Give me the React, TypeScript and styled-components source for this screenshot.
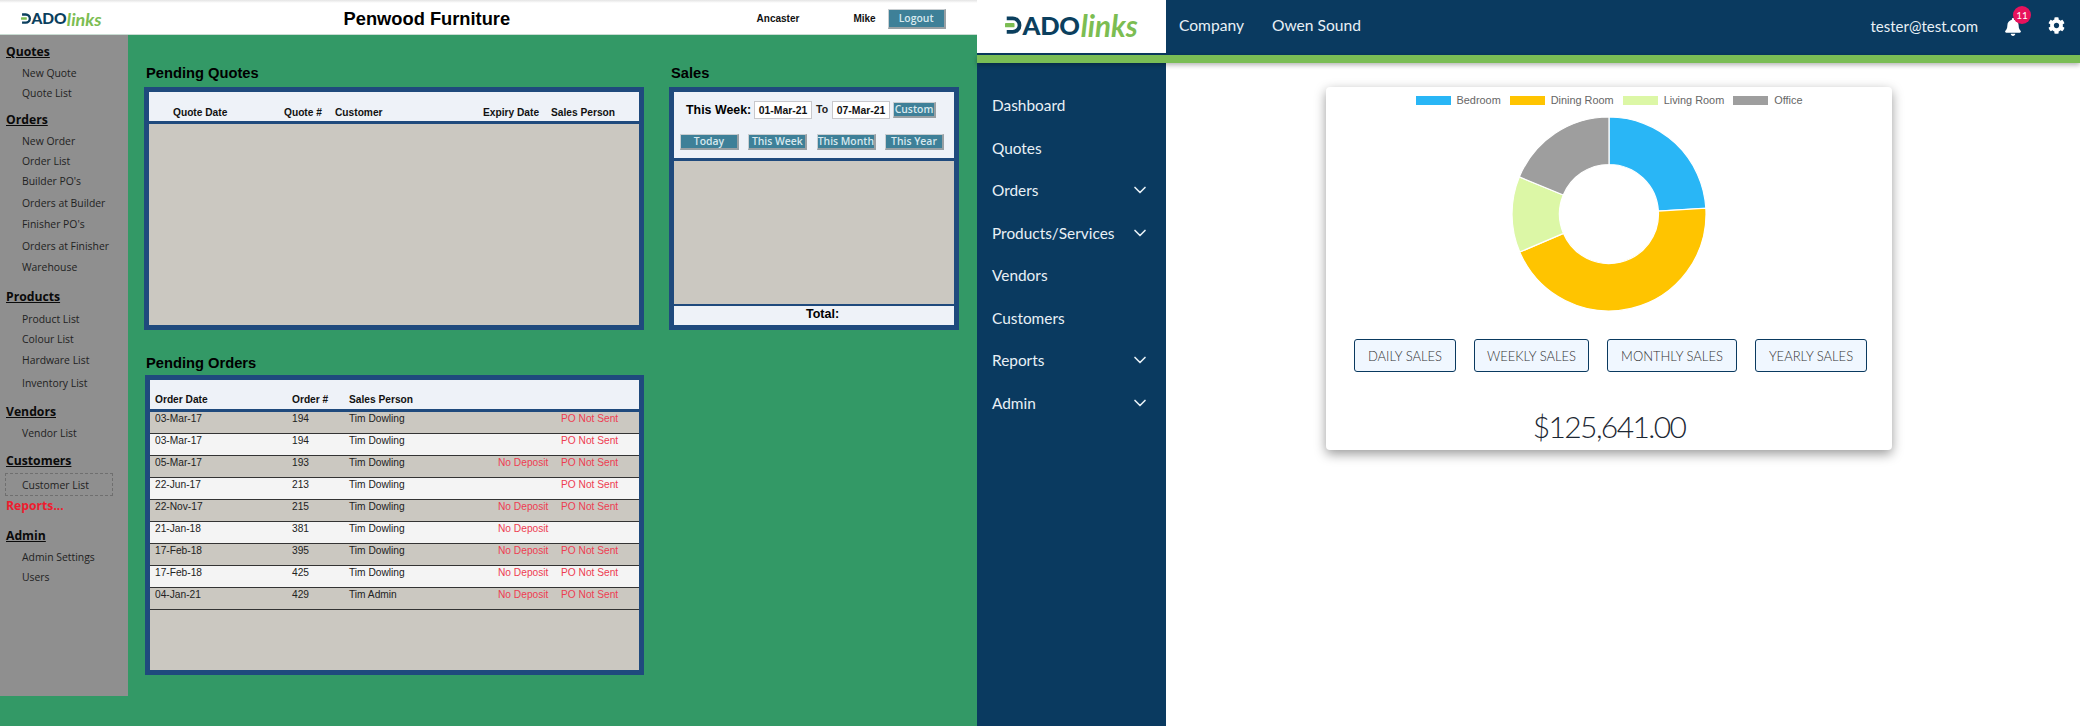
import React from "react"
import styled, { createGlobalStyle } from "styled-components"
import { FaBell, FaCog } from "react-icons/fa"
import { ChevronDown } from "lucide-react"

const GlobalStyle = createGlobalStyle`
  html, body {
    margin: 0;
    padding: 0;
    background: #fff;
  }
  * {
    box-sizing: border-box;
  }
`

const Page = styled.div`
  display: flex;
  width: 2080px;
  height: 726px;
  overflow: hidden;
`

/* shared logo */
const LogoWrap = styled.div<{ $size: number }>`
  display: flex;
  align-items: center;
  font-size: ${(p) => p.$size}px;
  line-height: 1;
  white-space: nowrap;

  svg {
    width: 0.68em;
    height: 0.72em;
    flex: none;
  }
`

const LogoDark = styled.span`
  font-family: Lato, "Liberation Sans", sans-serif;
  font-weight: 900;
  color: #0b3f5e;
  letter-spacing: -0.01em;
`

const LogoGreen = styled.span`
  font-family: Lato, "Liberation Sans", sans-serif;
  font-style: italic;
  font-weight: 700;
  color: #7cbd52;
  font-size: 1.16em;
  margin-left: 0.03em;
`

const Logo = ({ size }: { size: number }) => (
  <LogoWrap $size={size}>
    <svg viewBox="0 0 20 20">
      <path d="M2 0H9a10 10 0 0 1 0 20H2v-4.4H9a5.6 5.6 0 0 0 0-11.2H2Z" fill="#0b3f5e" />
      <rect x="0" y="7.6" width="11" height="4.8" rx="1" fill="#7cbd52" />
    </svg>
    <LogoDark>ADO</LogoDark>
    <LogoGreen>links</LogoGreen>
  </LogoWrap>
)

/* old dashboard, left half */
const OldApp = styled.div`
  width: 977px;
  height: 726px;
  background: #339966;
  font-family: "Liberation Sans", Arial, sans-serif;
  flex: none;
`

const OldHeader = styled.header`
  position: relative;
  display: flex;
  align-items: center;
  height: 35px;
  padding: 3px 0 0 21px;
  background: linear-gradient(#e4e4e4, #fff 3px);
  border-bottom: 1px solid #c9dcd2;
`

const OldTitle = styled.h1`
  margin: 0 0 0 242px;
  width: 166px;
  font-size: 18.3px;
  font-weight: 700;
  color: #000;
  white-space: nowrap;
`

const Branch = styled.span`
  margin-left: 247px;
  font-size: 10px;
  font-weight: 700;
  color: #111;
`

const OldUser = styled(Branch)`
  margin-left: 54px;
`

const TealButton = styled.button<{ $w: number; $h?: number }>`
  width: ${(p) => p.$w}px;
  height: ${(p) => p.$h ?? 16}px;
  padding: 0;
  background: #3e8098;
  color: #d7e9ef;
  border: 1px solid #c9ced1;
  border-right: 2px solid #98a0a4;
  border-bottom: 2px solid #98a0a4;
  font-family: "Open Sans", sans-serif;
  font-size: 10.4px;
  font-weight: 600;
  line-height: 1;
  white-space: nowrap;
`

const LogoutButton = styled(TealButton)`
  margin-left: 12px;
`

const OldBody = styled.div`
  display: flex;
`

const OldSidebar = styled.nav`
  width: 128px;
  height: 661px;
  padding-top: 7px;
  background: #8f8f8f;
  font-family: "Open Sans", sans-serif;
  flex: none;
`

const NavHeading = styled.div<{ $mt?: number; $red?: boolean }>`
  height: 20px;
  margin-top: ${(p) => p.$mt ?? 0}px;
  padding-left: 6px;
  font-size: 12.2px;
  line-height: 20px;
  font-weight: 700;
  color: ${(p) => (p.$red ? "#ee1c2e" : "#0a0a0a")};
  text-decoration: ${(p) => (p.$red ? "none" : "underline")};
`

const NavItem = styled.div<{ $h: number; $active?: boolean }>`
  display: flex;
  align-items: center;
  height: ${(p) => p.$h}px;
  padding-left: ${(p) => (p.$active ? 16 : 22)}px;
  font-size: 10.4px;
  color: #222;
  ${(p) =>
    p.$active &&
    `
    width: 108px;
    margin: 2px 0 0 5px;
    border: 1px dashed #6f6f6f;
  `}
`

const OldMain = styled.main`
  flex: 1;
  padding: 29px 0 0 16px;
`

const TopRow = styled.div`
  display: flex;
  gap: 25px;
`

const Section = styled.section<{ $w: number; $mt?: number; $ml?: number }>`
  width: ${(p) => p.$w}px;
  margin-top: ${(p) => p.$mt ?? 0}px;
  margin-left: ${(p) => p.$ml ?? 0}px;
`

const SectionTitle = styled.h2<{ $mb?: number; $ml?: number }>`
  margin: 0 0 ${(p) => p.$mb ?? 5}px ${(p) => p.$ml ?? 2}px;
  font-size: 14.7px;
  line-height: 18px;
  font-weight: 700;
  color: #000;
`

const Frame = styled.div<{ $h: number }>`
  display: flex;
  flex-direction: column;
  height: ${(p) => p.$h}px;
  border: 5px solid #1f4a7d;
  background: #1f4a7d;
`

const TableHead = styled.div<{ $cols: string; $pl: number; $pb?: number }>`
  display: grid;
  grid-template-columns: ${(p) => p.$cols};
  align-items: end;
  height: 29px;
  padding: 0 0 ${(p) => p.$pb ?? 3}px ${(p) => p.$pl}px;
  background: #eef2f8;
  font-size: 10.2px;
  font-weight: 700;
  color: #111;
  white-space: nowrap;
`

const Grey = styled.div<{ $mt?: number }>`
  flex: 1;
  margin-top: ${(p) => p.$mt ?? 3}px;
  background: #cbc8c1;
`

const quoteCols = "111px 51px 148px 68px auto"
const orderCols = "137px 57px 149px 63px auto"

const OrderRows = styled.div`
  flex: 1;
  margin-top: 3px;
  background: #cbc8c1;
`

const OrderRow = styled.div<{ $even: boolean }>`
  display: grid;
  grid-template-columns: ${orderCols};
  height: 22px;
  padding: 1px 0 0 5px;
  background: ${(p) => (p.$even ? "#f4f4f4" : "#cbc8c1")};
  border-bottom: 1px solid #333;
  font-size: 10.2px;
  line-height: 12px;
  color: #222;
  white-space: nowrap;
`

const Flag = styled.span`
  color: #ee3d52;
`

const WeekBox = styled.div`
  height: 66px;
  padding: 9px 6px 0;
  background: #eef2f8;
`

const WeekRow = styled.div`
  display: flex;
  align-items: center;
  height: 18px;
  padding-left: 6px;
`

const WeekLabel = styled.span`
  width: 68px;
  font-size: 12.4px;
  font-weight: 700;
  color: #000;
  white-space: nowrap;
`

const DateInput = styled.input`
  width: 58px;
  height: 18px;
  padding: 0;
  border: 1px solid #c8c8cc;
  background: #fff;
  text-align: center;
  font-family: "Liberation Sans", sans-serif;
  font-size: 10.4px;
  font-weight: 700;
  color: #111;
`

const ToLabel = styled.span`
  width: 20px;
  padding: 0 0 2px 4px;
  font-size: 10.5px;
  font-weight: 700;
  color: #222;
`

const CustomButton = styled(TealButton)`
  margin-left: 3px;
`

const RangeRow = styled.div`
  display: flex;
  justify-content: space-between;
  width: 264px;
  margin-top: 15px;
`

const TotalBar = styled.div`
  height: 19px;
  margin-top: 2px;
  padding-left: 132px;
  background: #eef2f8;
  font-size: 12.5px;
  font-weight: 700;
  line-height: 17px;
  color: #000;
`

/* new dashboard, right half */
const NewApp = styled.div`
  flex: 1;
  display: flex;
  flex-direction: column;
  font-family: Lato, "Open Sans", sans-serif;
`

const TopBar = styled.header`
  display: flex;
  align-items: flex-start;
  height: 55px;
  background: #0a3a60;
  color: #e8f0f6;
  font-size: 15.6px;
`

const LogoBox = styled.div`
  display: flex;
  align-items: center;
  justify-content: center;
  width: 189px;
  height: 53px;
  padding-bottom: 2px;
  background: #fff;
`

const TopLink = styled.span`
  margin-left: 13px;
  line-height: 51px;
  & + & {
    margin-left: 28px;
  }
`

const TopRight = styled.div`
  display: flex;
  align-items: center;
  height: 51px;
  margin-left: auto;
  padding-right: 15px;
  font-size: 15px;
`

const BellWrap = styled.div`
  position: relative;
  display: flex;
  margin: 2px 0 0 26px;
`

const Badge = styled.span`
  position: absolute;
  top: -12px;
  left: 9px;
  width: 18px;
  height: 18px;
  border-radius: 50%;
  background: #e8125c;
  color: #fff;
  font-size: 10px;
  line-height: 18px;
  text-align: center;
`

const GearWrap = styled.div`
  display: flex;
  margin-left: 26px;
`

const AccentBar = styled.div`
  position: relative;
  height: 8px;
  background: #7abd55;
  box-shadow: 0 2px 5px rgba(0, 0, 0, 0.3);
`

const NewBody = styled.div`
  flex: 1;
  display: flex;
`

const NewSidebar = styled.nav`
  width: 189px;
  padding: 21px 0 0 15px;
  background: #0a3a60;
  color: #e8f0f6;
  font-size: 15.4px;
`

const SideLink = styled.div`
  display: flex;
  align-items: center;
  justify-content: space-between;
  height: 42.5px;
  padding-right: 16px;
`

const Content = styled.div`
  flex: 1;
  padding: 24px 0 0 160px;
  background: #fff;
`

const Card = styled.div`
  width: 566px;
  height: 363px;
  padding-top: 6px;
  border-radius: 4px;
  background: #fff;
  box-shadow: 0 4px 12px rgba(0, 0, 0, 0.4);
`

const Legend = styled.div`
  display: flex;
  justify-content: center;
  height: 14px;
  gap: 9px;
  font-family: "Liberation Sans", sans-serif;
  font-size: 10.9px;
  line-height: 14px;
  color: #666;
`

const LegendItem = styled.div`
  display: flex;
  align-items: center;
  gap: 6px;
`

const Swatch = styled.i<{ $color: string }>`
  width: 35px;
  height: 9px;
  background: ${(p) => p.$color};
`

const Donut = styled.svg`
  display: block;
  width: 196px;
  height: 196px;
  margin: 9px auto 0;
`

const SalesButtons = styled.div`
  display: flex;
  gap: 18px;
  margin-top: 27px;
  padding-left: 28px;
`

const SalesButton = styled.button<{ $w: number }>`
  width: ${(p) => p.$w}px;
  height: 33px;
  padding: 0;
  background: #f0f7ff;
  border: 1px solid #0a3a60;
  border-radius: 3px;
  font-family: Lato, sans-serif;
  font-size: 13px;
  font-weight: 300;
  color: #333;
`

const Amount = styled.div`
  margin-top: 34px;
  font-size: 30px;
  font-weight: 300;
  letter-spacing: -1.6px;
  line-height: 40px;
  text-align: center;
  color: #1c2733;
`

const sidebarRows: { label: string; kind: "h" | "i"; h?: number; mt?: number; red?: boolean; active?: boolean }[] = [
  { label: "Quotes", kind: "h", mt: 0 },
  { label: "New Quote", kind: "i", h: 22 },
  { label: "Quote List", kind: "i", h: 18 },
  { label: "Orders", kind: "h", mt: 8 },
  { label: "New Order", kind: "i", h: 22 },
  { label: "Order List", kind: "i", h: 18 },
  { label: "Builder PO's", kind: "i", h: 22 },
  { label: "Orders at Builder", kind: "i", h: 22 },
  { label: "Finisher PO's", kind: "i", h: 20 },
  { label: "Orders at Finisher", kind: "i", h: 24 },
  { label: "Warehouse", kind: "i", h: 18 },
  { label: "Products", kind: "h", mt: 11 },
  { label: "Product List", kind: "i", h: 23 },
  { label: "Colour List", kind: "i", h: 18 },
  { label: "Hardware List", kind: "i", h: 24 },
  { label: "Inventory List", kind: "i", h: 22 },
  { label: "Vendors", kind: "h", mt: 8 },
  { label: "Vendor List", kind: "i", h: 21 },
  { label: "Customers", kind: "h", mt: 8 },
  { label: "Customer List", kind: "i", h: 23, active: true },
  { label: "Reports...", kind: "h", red: true },
  { label: "Admin", kind: "h", mt: 10 },
  { label: "Admin Settings", kind: "i", h: 21 },
  { label: "Users", kind: "i", h: 20 },
]

const orders = [
  ["03-Mar-17", "194", "Tim Dowling", "", "PO Not Sent"],
  ["03-Mar-17", "194", "Tim Dowling", "", "PO Not Sent"],
  ["05-Mar-17", "193", "Tim Dowling", "No Deposit", "PO Not Sent"],
  ["22-Jun-17", "213", "Tim Dowling", "", "PO Not Sent"],
  ["22-Nov-17", "215", "Tim Dowling", "No Deposit", "PO Not Sent"],
  ["21-Jan-18", "381", "Tim Dowling", "No Deposit", ""],
  ["17-Feb-18", "395", "Tim Dowling", "No Deposit", "PO Not Sent"],
  ["17-Feb-18", "425", "Tim Dowling", "No Deposit", "PO Not Sent"],
  ["04-Jan-21", "429", "Tim Admin", "No Deposit", "PO Not Sent"],
]

const sideLinks = [
  { label: "Dashboard" },
  { label: "Quotes" },
  { label: "Orders", more: true },
  { label: "Products/Services", more: true },
  { label: "Vendors" },
  { label: "Customers" },
  { label: "Reports", more: true },
  { label: "Admin", more: true },
]

const legend = [
  { label: "Bedroom", color: "#29b6f6" },
  { label: "Dining Room", color: "#ffc400" },
  { label: "Living Room", color: "#dcf7a6" },
  { label: "Office", color: "#9e9e9e" },
]

const slices = [
  { from: 0, to: 86.6, color: "#29b6f6" },
  { from: 86.6, to: 246.9, color: "#ffc400" },
  { from: 246.9, to: 292.5, color: "#dcf7a6" },
  { from: 292.5, to: 360, color: "#9e9e9e" },
]

function slicePath(from: number, to: number) {
  const c = 98
  const pt = (deg: number, r: number) => {
    const a = (deg * Math.PI) / 180
    return `${(c + r * Math.sin(a)).toFixed(2)} ${(c - r * Math.cos(a)).toFixed(2)}`
  }
  const large = to - from > 180 ? 1 : 0
  return [
    `M${pt(from, 97)}`,
    `A97 97 0 ${large} 1 ${pt(to, 97)}`,
    `L${pt(to, 49.5)}`,
    `A49.5 49.5 0 ${large} 0 ${pt(from, 49.5)}`,
    "Z",
  ].join(" ")
}

export default function App() {
  return (
    <Page>
      <GlobalStyle />
      <OldApp>
        <OldHeader>
          <Logo size={15.5} />
          <OldTitle>Penwood Furniture</OldTitle>
          <Branch>Ancaster</Branch>
          <OldUser>Mike</OldUser>
          <LogoutButton $w={58} $h={20}>Logout</LogoutButton>
        </OldHeader>
        <OldBody>
          <OldSidebar>
            {sidebarRows.map((r) =>
              r.kind === "h" ? (
                <NavHeading key={r.label} $mt={r.mt} $red={r.red}>
                  {r.label}
                </NavHeading>
              ) : (
                <NavItem key={r.label} $h={r.h ?? 20} $active={r.active}>
                  {r.label}
                </NavItem>
              ),
            )}
          </OldSidebar>
          <OldMain>
            <TopRow>
              <Section $w={500}>
                <SectionTitle>Pending Quotes</SectionTitle>
                <Frame $h={243}>
                  <TableHead $cols={quoteCols} $pl={24}>
                    <span>Quote Date</span>
                    <span>Quote #</span>
                    <span>Customer</span>
                    <span>Expiry Date</span>
                    <span>Sales Person</span>
                  </TableHead>
                  <Grey />
                </Frame>
              </Section>
              <Section $w={290}>
                <SectionTitle>Sales</SectionTitle>
                <Frame $h={243}>
                  <WeekBox>
                    <WeekRow>
                      <WeekLabel>This Week:</WeekLabel>
                      <DateInput readOnly value="01-Mar-21" />
                      <ToLabel>To</ToLabel>
                      <DateInput readOnly value="07-Mar-21" />
                      <CustomButton $w={43}>Custom</CustomButton>
                    </WeekRow>
                    <RangeRow>
                      <TealButton $w={59}>Today</TealButton>
                      <TealButton $w={59}>This Week</TealButton>
                      <TealButton $w={59}>This Month</TealButton>
                      <TealButton $w={59}>This Year</TealButton>
                    </RangeRow>
                  </WeekBox>
                  <Grey />
                  <TotalBar>Total:</TotalBar>
                </Frame>
              </Section>
            </TopRow>
            <Section $w={499} $mt={24} $ml={1}>
              <SectionTitle $mb={3} $ml={1}>Pending Orders</SectionTitle>
              <Frame $h={300}>
                <TableHead $cols={orderCols} $pl={5} $pb={4}>
                  <span>Order Date</span>
                  <span>Order #</span>
                  <span>Sales Person</span>
                </TableHead>
                <OrderRows>
                  {orders.map((o, i) => (
                    <OrderRow key={i} $even={i % 2 === 1}>
                      <span>{o[0]}</span>
                      <span>{o[1]}</span>
                      <span>{o[2]}</span>
                      <Flag>{o[3]}</Flag>
                      <Flag>{o[4]}</Flag>
                    </OrderRow>
                  ))}
                </OrderRows>
              </Frame>
            </Section>
          </OldMain>
        </OldBody>
      </OldApp>

      <NewApp>
        <TopBar>
          <LogoBox>
            <Logo size={25.5} />
          </LogoBox>
          <TopLink>Company</TopLink>
          <TopLink>Owen Sound</TopLink>
          <TopRight>
            <span>tester@test.com</span>
            <BellWrap>
              <FaBell size={18} color="#fff" />
              <Badge>11</Badge>
            </BellWrap>
            <GearWrap>
              <FaCog size={17} color="#fff" />
            </GearWrap>
          </TopRight>
        </TopBar>
        <AccentBar />
        <NewBody>
          <NewSidebar>
            {sideLinks.map((l) => (
              <SideLink key={l.label}>
                <span>{l.label}</span>
                {l.more && <ChevronDown size={20} strokeWidth={2} />}
              </SideLink>
            ))}
          </NewSidebar>
          <Content>
            <Card>
              <Legend>
                {legend.map((l) => (
                  <LegendItem key={l.label}>
                    <Swatch $color={l.color} />
                    {l.label}
                  </LegendItem>
                ))}
              </Legend>
              <Donut viewBox="0 0 196 196">
                {slices.map((s) => (
                  <path key={s.from} d={slicePath(s.from, s.to)} fill={s.color} stroke="#fff" strokeWidth={1.2} />
                ))}
              </Donut>
              <SalesButtons>
                <SalesButton $w={102}>DAILY SALES</SalesButton>
                <SalesButton $w={115}>WEEKLY SALES</SalesButton>
                <SalesButton $w={130}>MONTHLY SALES</SalesButton>
                <SalesButton $w={112}>YEARLY SALES</SalesButton>
              </SalesButtons>
              <Amount>$125,641.00</Amount>
            </Card>
          </Content>
        </NewBody>
      </NewApp>
    </Page>
  )
}
